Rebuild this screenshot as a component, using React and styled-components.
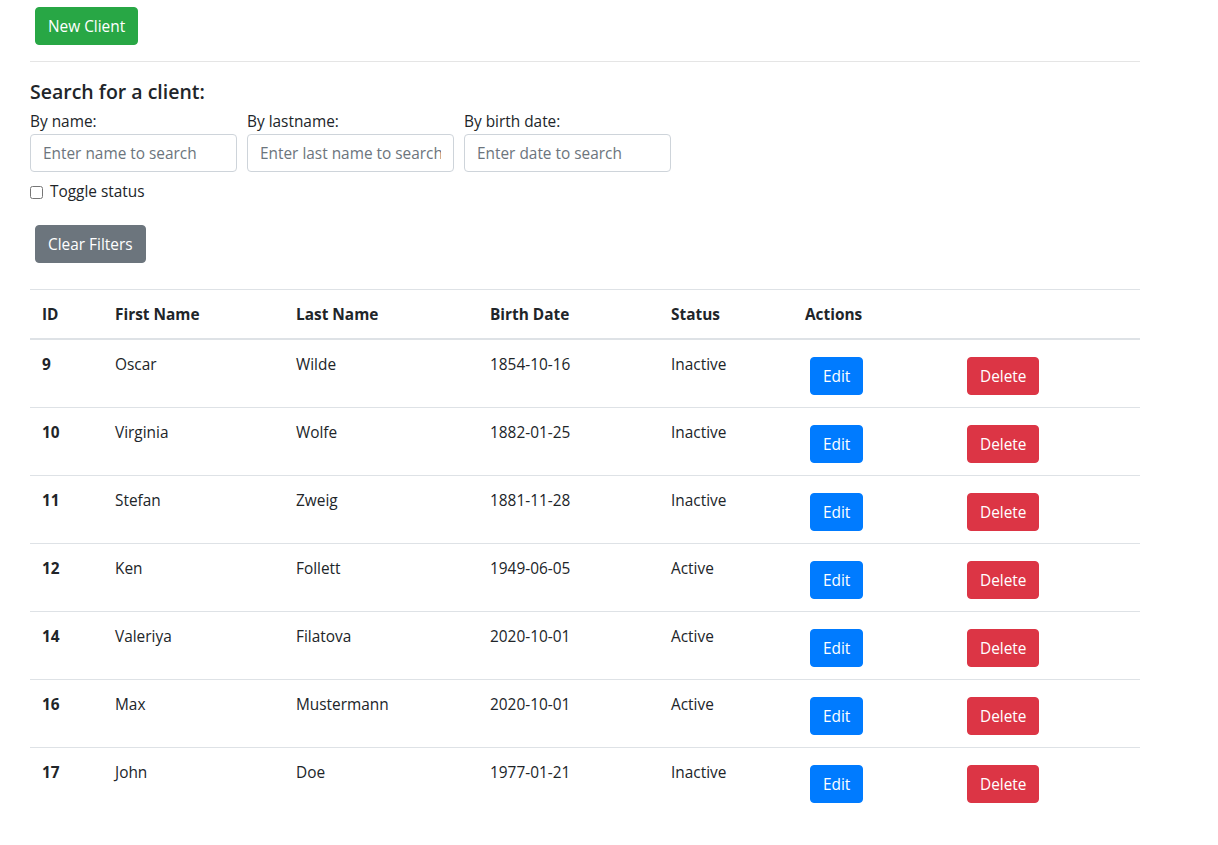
import React from 'react';
import styled, { createGlobalStyle } from 'styled-components';

const GlobalStyle = createGlobalStyle`
  body {
    margin: 0;
    background: #fff;
    color: #212529;
    font-family: "Open Sans", "Noto Sans", "Liberation Sans", sans-serif;
    font-size: 15.4px;
    line-height: 24px;
  }
  * { box-sizing: border-box; }
`;

const Page = styled.div`
  width: 1110px;
  margin-left: 30px;
  padding-top: 7px;
`;

const Btn = styled.button`
  display: inline-block;
  height: 38px;
  padding: 1px 12px 0;
  margin: ${(p) => p.$margin || '0 0 0 5px'};
  border: 1px solid ${(p) => p.$bg};
  border-radius: 4px;
  background: ${(p) => p.$bg};
  color: #fff;
  font-family: inherit;
  font-size: 15.4px;
  line-height: 35px;
  cursor: pointer;
  vertical-align: top;
`;

const Divider = styled.hr`
  margin: 16px 0;
  border: 0;
  border-top: 1px solid rgba(0, 0, 0, 0.1);
`;

const Heading = styled.h5`
  margin: 0 0 5px;
  padding-top: 2px;
  font-size: 19.5px;
  font-weight: 600;
  line-height: 24px;
`;

const FilterRow = styled.div`
  display: flex;
  gap: 10px;
`;

const Field = styled.div`
  display: flex;
  flex-direction: column;
  width: 207px;
`;

const Label = styled.label`
  line-height: 25px;
`;

const Input = styled.input`
  height: 38px;
  padding: 6px 12px;
  border: 1px solid #ced4da;
  border-radius: 4px;
  font-family: inherit;
  font-size: 15.4px;
  color: #495057;
  &::placeholder { color: #6c757d; }
`;

const CheckRow = styled.label`
  display: flex;
  align-items: center;
  gap: 7px;
  height: 24px;
  margin-top: 8px;
  input { margin: 0; width: 13px; height: 13px; }
`;

const ClearWrap = styled.div`
  margin-top: 21px;
`;

const Table = styled.table`
  width: 100%;
  margin-top: 26px;
  border-collapse: collapse;
  table-layout: fixed;
  th, td {
    padding: 13px 12px 12px;
    vertical-align: top;
    text-align: left;
    border-top: 1px solid #dee2e6;
  }
  thead th {
    padding-bottom: 11px;
    font-weight: 700;
    border-bottom: 2px solid #dee2e6;
  }
  tbody td:first-child { font-weight: 700; }
`;

const columns = [
  { label: 'ID', width: 73 },
  { label: 'First Name', width: 181 },
  { label: 'Last Name', width: 194 },
  { label: 'Birth Date', width: 181 },
  { label: 'Status', width: 134 },
  { label: 'Actions', width: 157 },
  { label: '', width: 190 },
];

const clients = [
  [9, 'Oscar', 'Wilde', '1854-10-16', 'Inactive'],
  [10, 'Virginia', 'Wolfe', '1882-01-25', 'Inactive'],
  [11, 'Stefan', 'Zweig', '1881-11-28', 'Inactive'],
  [12, 'Ken', 'Follett', '1949-06-05', 'Active'],
  [14, 'Valeriya', 'Filatova', '2020-10-01', 'Active'],
  [16, 'Max', 'Mustermann', '2020-10-01', 'Active'],
  [17, 'John', 'Doe', '1977-01-21', 'Inactive'],
];

export default function App() {
  return (
    <>
      <GlobalStyle />
      <Page>
        <Btn $bg="#28a745">New Client</Btn>
        <Divider />
        <Heading>Search for a client:</Heading>
        <FilterRow>
          <Field>
            <Label>By name:</Label>
            <Input placeholder="Enter name to search" />
          </Field>
          <Field>
            <Label>By lastname:</Label>
            <Input placeholder="Enter last name to search" />
          </Field>
          <Field>
            <Label>By birth date:</Label>
            <Input placeholder="Enter date to search" />
          </Field>
        </FilterRow>
        <CheckRow>
          <input type="checkbox" />
          Toggle status
        </CheckRow>
        <ClearWrap>
          <Btn $bg="#6c757d">Clear Filters</Btn>
        </ClearWrap>
        <Table>
          <colgroup>
            {columns.map((c, i) => (
              <col key={i} style={{ width: c.width }} />
            ))}
          </colgroup>
          <thead>
            <tr>
              {columns.map((c, i) => (
                <th key={i}>{c.label}</th>
              ))}
            </tr>
          </thead>
          <tbody>
            {clients.map(([id, first, last, birth, status]) => (
              <tr key={id}>
                <td>{id}</td>
                <td>{first}</td>
                <td>{last}</td>
                <td>{birth}</td>
                <td>{status}</td>
                <td>
                  <Btn $bg="#007bff" $margin="4px 0 0 5px">Edit</Btn>
                </td>
                <td>
                  <Btn $bg="#dc3545" $margin="4px 0 0 5px">Delete</Btn>
                </td>
              </tr>
            ))}
          </tbody>
        </Table>
      </Page>
    </>
  );
}
